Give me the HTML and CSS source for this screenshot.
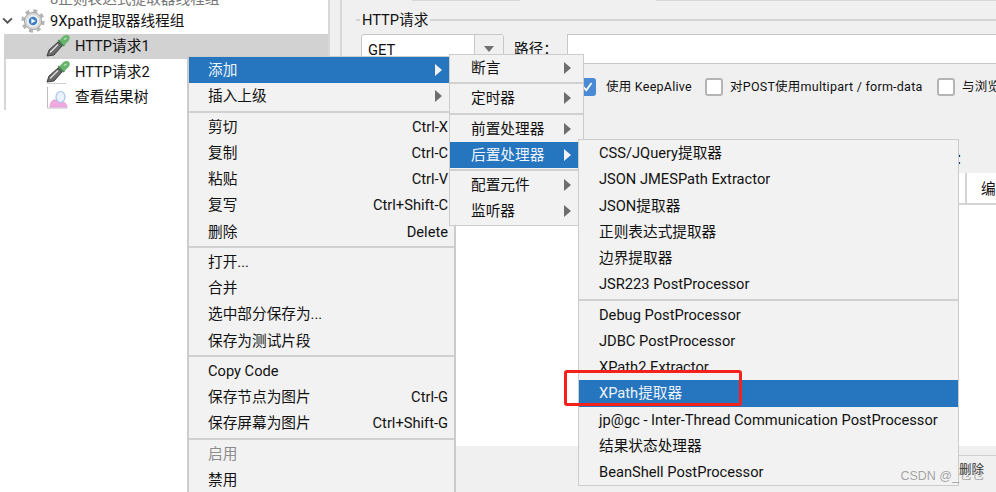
FILE: index.html
```html
<!DOCTYPE html>
<html lang="zh">
<head>
<meta charset="utf-8">
<title>JMeter</title>
<link rel="stylesheet" href="styles.css">
</head>
<body>
<svg class="defs" width="0" height="0" aria-hidden="true">
  <symbol id="gear" viewBox="0 0 24 24">
    <circle cx="12" cy="12" r="10" fill="none" stroke="#b4b4b4" stroke-width="3.400" stroke-dasharray="3.900 3.950"/>
    <circle cx="12" cy="12" r="8.600" fill="#d6d6d6" stroke="#a6a6a6" stroke-width="1"/>
    <circle cx="12" cy="12" r="5.200" fill="#3f7fc0" stroke="#eef2f7" stroke-width="1.800"/>
    <path d="M10.300 9.500l4.400 2.500-4.400 2.500z" fill="#f4f8fc"/>
  </symbol>
  <symbol id="pipette" viewBox="0 0 24 24">
    <path d="M1 23.500h19" stroke="#cfcfcf" stroke-width="1" fill="none"/>
    <path d="M1 22l2-6 9-8 4 4-8 9z" fill="#6a6a6a" stroke="#404040" stroke-width="1"/>
    <path d="M4 18.500l8-8" stroke="#dedede" stroke-width="1.500" fill="none"/>
    <path d="M11.500 7l5.500 5.500 2-1-6-6z" fill="#43804a"/>
    <path d="M13.500 6l3.500-3.500c2-2 5.500-2 6.500 0 .8 2.500-.5 4.500-2.500 6l-3 3z" fill="#69b56d"/>
    <path d="M18 5.500l2.500-1.500" stroke="#bfe8c0" stroke-width="1.400" fill="none"/>
  </symbol>
  <symbol id="tree-result" viewBox="0 0 24 24">
    <path d="M1.500 2v21h20" stroke="#bdbdbd" stroke-width="1" fill="none"/>
    <path d="M4 22c0-5 3-8 6-7 3 1 4 3 7 2.500 2-.3 4 1.500 4 4.500z" fill="#f0a8e0" stroke="#e490d2" stroke-width=".6"/>
    <ellipse cx="14.500" cy="12" rx="4.500" ry="5.500" fill="#e8f2fc" stroke="#a5c4ea" stroke-width="1.200"/>
  </symbol>
  <symbol id="chev" viewBox="0 0 10 6">
    <path d="M1 1l4 4 4-4" fill="none" stroke="#555" stroke-width="1.700"/>
  </symbol>
</svg>

<div class="app">
  <aside class="tree">
    <div class="tree-clip"><span class="muted">8正则表达式提取器线程组</span></div>
    <div class="tree-row group">
      <svg class="chev"><use href="#chev"/></svg>
      <svg class="icon-gear"><use href="#gear"/></svg>
      <span>9Xpath提取器线程组</span>
    </div>
    <div class="children">
      <div class="tree-row child selected">
        <svg class="icon-leaf"><use href="#pipette"/></svg><span>HTTP请求1</span>
      </div>
      <div class="tree-row child">
        <svg class="icon-leaf"><use href="#pipette"/></svg><span>HTTP请求2</span>
      </div>
      <div class="tree-row child">
        <svg class="icon-leaf"><use href="#tree-result"/></svg><span>查看结果树</span>
      </div>
    </div>
  </aside>

  <div class="splitter"></div>

  <main class="panel">
    <div class="tabs"><span class="tab-a"></span><span class="tab-b"></span></div>
    <div class="legend"><span class="legend-stub"></span><span class="legend-text">HTTP请求</span><span class="legend-line"></span></div>
    <div class="path-row">
      <div class="combo">
        <span class="combo-value">GET</span>
        <span class="combo-btn"><span class="combo-arrow"></span></span>
      </div>
      <span class="path-label">路径：</span>
      <div class="path-input"></div>
    </div>
    <div class="checks">
      <span class="check on"><svg viewBox="0 0 16 16"><path d="M3 8l3.500 4L13 3" fill="none" stroke="#fff" stroke-width="2.200"/></svg></span>
      <span class="check-text first">使用 KeepAlive</span>
      <span class="check"></span>
      <span class="check-text second">对POST使用multipart / form-data</span>
      <span class="check"></span>
      <span class="check-text">与浏览器兼容的头</span>
    </div>
    <div class="params-label">同请求一起发送参数：</div>
    <div class="table">
      <div class="thead"><span class="th-main"></span><span class="th-enc">编码?</span></div>
      <div class="tbody"></div>
    </div>
    <div class="actions"><span class="del-btn">删除</span></div>
  </main>
</div>

<nav class="menu menu-main">
  <div class="item active"><span>添加</span><i class="arrow"></i></div>
  <div class="item"><span>插入上级</span><i class="arrow"></i></div>
  <hr>
  <div class="item"><span>剪切</span><kbd>Ctrl-X</kbd></div>
  <div class="item"><span>复制</span><kbd>Ctrl-C</kbd></div>
  <div class="item"><span>粘贴</span><kbd>Ctrl-V</kbd></div>
  <div class="item"><span>复写</span><kbd>Ctrl+Shift-C</kbd></div>
  <div class="item"><span>删除</span><kbd>Delete</kbd></div>
  <hr>
  <div class="item"><span>打开...</span></div>
  <div class="item"><span>合并</span></div>
  <div class="item"><span>选中部分保存为...</span></div>
  <div class="item"><span>保存为测试片段</span></div>
  <hr>
  <div class="item"><span>Copy Code</span></div>
  <div class="item"><span>保存节点为图片</span><kbd>Ctrl-G</kbd></div>
  <div class="item"><span>保存屏幕为图片</span><kbd>Ctrl+Shift-G</kbd></div>
  <hr>
  <div class="item disabled"><span>启用</span></div>
  <div class="item"><span>禁用</span></div>
</nav>

<nav class="menu menu-sub">
  <div class="item"><span>断言</span><i class="arrow"></i></div>
  <hr>
  <div class="item"><span>定时器</span><i class="arrow"></i></div>
  <hr>
  <div class="item"><span>前置处理器</span><i class="arrow"></i></div>
  <div class="item active"><span>后置处理器</span><i class="arrow"></i></div>
  <hr>
  <div class="item"><span>配置元件</span><i class="arrow"></i></div>
  <div class="item"><span>监听器</span><i class="arrow"></i></div>
</nav>

<nav class="menu menu-post">
  <div class="item"><span>CSS/JQuery提取器</span></div>
  <div class="item"><span>JSON JMESPath Extractor</span></div>
  <div class="item"><span>JSON提取器</span></div>
  <div class="item"><span>正则表达式提取器</span></div>
  <div class="item"><span>边界提取器</span></div>
  <div class="item"><span>JSR223 PostProcessor</span></div>
  <hr>
  <div class="item"><span>Debug PostProcessor</span></div>
  <div class="item"><span>JDBC PostProcessor</span></div>
  <div class="item"><span>XPath2 Extractor</span></div>
  <div class="item active"><span>XPath提取器</span></div>
  <div class="item"><span>jp@gc - Inter-Thread Communication PostProcessor</span></div>
  <div class="item"><span>结果状态处理器</span></div>
  <div class="item"><span>BeanShell PostProcessor</span></div>
</nav>

<div class="redbox"></div>
<div class="watermark">CSDN @_乜乜</div>
</body>
</html>
```
FILE: styles.css
```css
* { box-sizing: border-box; }
html, body { margin: 0; height: 100%; }
body {
  width: 996px;
  height: 492px;
  overflow: hidden;
  position: relative;
  background: #fff;
  color: #111;
  font-family: Roboto, "Noto Sans CJK SC", sans-serif;
  font-size: 14.67px;
  line-height: 20px;
}
.defs { position: absolute; }

.app { display: flex; height: 492px; }

/* tree */
.tree { width: 328px; background: #fff; flex: none; }
.tree-clip {
  height: 8px;
  padding-left: 50px;
  display: flex;
  align-items: flex-end;
  overflow: hidden;
}
.muted { color: #777; flex: none; margin-bottom: -1px; }
.tree-row { height: 25.5px; display: flex; align-items: center; white-space: nowrap; }
.group { padding-left: 2px; }
.chev { width: 11px; height: 7px; flex: none; }
.icon-gear { width: 24px; height: 24px; margin-left: 8px; margin-right: 5px; flex: none; }
.children { border-left: 2px solid #d6d6d6; margin-left: 4px; }
.child { padding-left: 40px; }
.selected { background: #d2d2d2; margin-left: -2px; padding-left: 42px; }
.icon-leaf { width: 24px; height: 24px; margin-right: 5px; flex: none; }

.splitter { width: 14px; flex: none; background: #f0f0f0; border-left: 2px solid #d8d8d8; border-right: 2px solid #d8d8d8; }

/* right panel */
.panel { flex: 1; min-width: 0; background: #f0f0f0; display: flex; flex-direction: column; overflow: hidden; }
.tabs { height: 1px; display: flex; flex: none; }
.tab-a { width: 108px; margin-left: 70px; background: #d8d8d8; }
.tab-b { width: 340px; margin-left: 136px; background: #d8d8d8; }

.legend { height: 26px; margin-top: 6px; display: flex; align-items: center; flex: none; padding-left: 14px; }
.legend-stub { width: 4px; height: 2px; background: #d4d4d4; }
.legend-text { padding: 0 2px; white-space: nowrap; }
.legend-line { flex: 1; height: 2px; background: #d4d4d4; }

.path-row { display: flex; align-items: center; height: 30px; margin-top: 1px; padding-left: 19px; flex: none; }
.combo { width: 143px; height: 30px; flex: none; display: flex; background: #fff; border: 1px solid #c8c8c8; border-radius: 3px; }
.combo-value { flex: 1; padding: 5px 0 0 6px; }
.combo-btn { width: 29px; background: #f0f0f0; border-left: 1px solid #c8c8c8; display: flex; align-items: center; justify-content: center; }
.combo-arrow { border: 5px solid transparent; border-top: 6px solid #707070; border-bottom: 0; }
.path-label { width: 63px; padding-left: 10px; flex: none; }
.path-input { flex: 1; height: 30px; background: #fff; border: 1px solid #c8c8c8; border-right: 0; }

.checks { display: flex; align-items: center; height: 18px; margin-top: 14px; padding-left: 240px; flex: none; white-space: nowrap; }
.check { width: 18px; height: 18px; flex: none; background: #fff; border: 2px solid #b4b4b4; border-radius: 3px; display: flex; align-items: center; justify-content: center; }
.check.on { width: 17px; background: #4a8ad4; border-color: #4a8ad4; margin-left: -3px; }
.check svg { width: 14px; height: 14px; }
.check-text { font-size: 12.5px; margin-left: 7px; letter-spacing: .25px; }
.check-text.first { margin-left: 10px; width: 99px; flex: none; }
.check-text.second { width: 207px; flex: none; }

.params-label { height: 24px; margin-top: 53px; padding-right: 26px; text-align: right; flex: none; }

.table { flex: 1; display: flex; flex-direction: column; background: #fff; min-height: 0; }
.thead { height: 32px; display: flex; background: #f0f0f0; border-bottom: 2px solid #d4d4d4; flex: none; }
.th-main { width: 625px; background: #fff; border-right: 2px solid #d4d4d4; flex: none; }
.th-enc { flex: 1; background: #fff; padding: 6px 0 0 14px; white-space: nowrap; overflow: hidden; }
.tbody { flex: 1; background: #fff; }

.actions { height: 46px; flex: none; padding-top: 9px; display: flex; justify-content: flex-end; }
.del-btn { width: 120px; height: 30px; border-top: 1px solid #cfcfcf; padding: 4px 12px 0 0; text-align: right; font-size: 12.5px; color: #333; }

/* menus */
.menu {
  position: absolute;
  background: #f2f2f2;
  border: 1px solid #cccccc;
  font-size: 14.67px;
  color: #111;
}
.menu-main { left: 187px; top: 56px; width: 269px; height: 440px; border-width: 1px 2px 0 2px; }
.menu-sub { left: 449px; top: 54px; width: 135px; }
.menu-post { left: 578px; top: 139px; width: 381px; }
.item {
  height: 26.25px;
  padding: 0 6px 0 20px;
  display: flex;
  align-items: center;
  justify-content: space-between;
  white-space: nowrap;
}
.menu-main .item { padding-left: 19px; }
.menu-sub .item { padding: 0 12px 0 21px; }
.item kbd { font: inherit; }
.item.active { background: #2675bf; color: #eef4fb; }
.item.disabled { color: #8c8c8c; }
.menu hr { height: 4px; margin: 0; border: 0; position: relative; background: linear-gradient(#d0d0d0, #d0d0d0) center / 100% 2px no-repeat; }
.arrow { width: 0; height: 0; border: 6px solid transparent; border-left: 7px solid #6e6e6e; border-right: 0; flex: none; }
.menu-main .arrow { margin-right: 6px; }
.active .arrow { border-left-color: #f2f2f2; }

.redbox {
  position: absolute;
  left: 564px;
  top: 370px;
  width: 178px;
  height: 36px;
  border: 3px solid #f5221b;
  border-radius: 3px;
}
.watermark {
  position: absolute;
  right: 12px;
  top: 466px;
  font-family: "Liberation Sans", "Noto Sans CJK SC", sans-serif;
  font-size: 12.5px;
  color: rgba(110, 110, 110, .6);
  white-space: nowrap;
}
```
